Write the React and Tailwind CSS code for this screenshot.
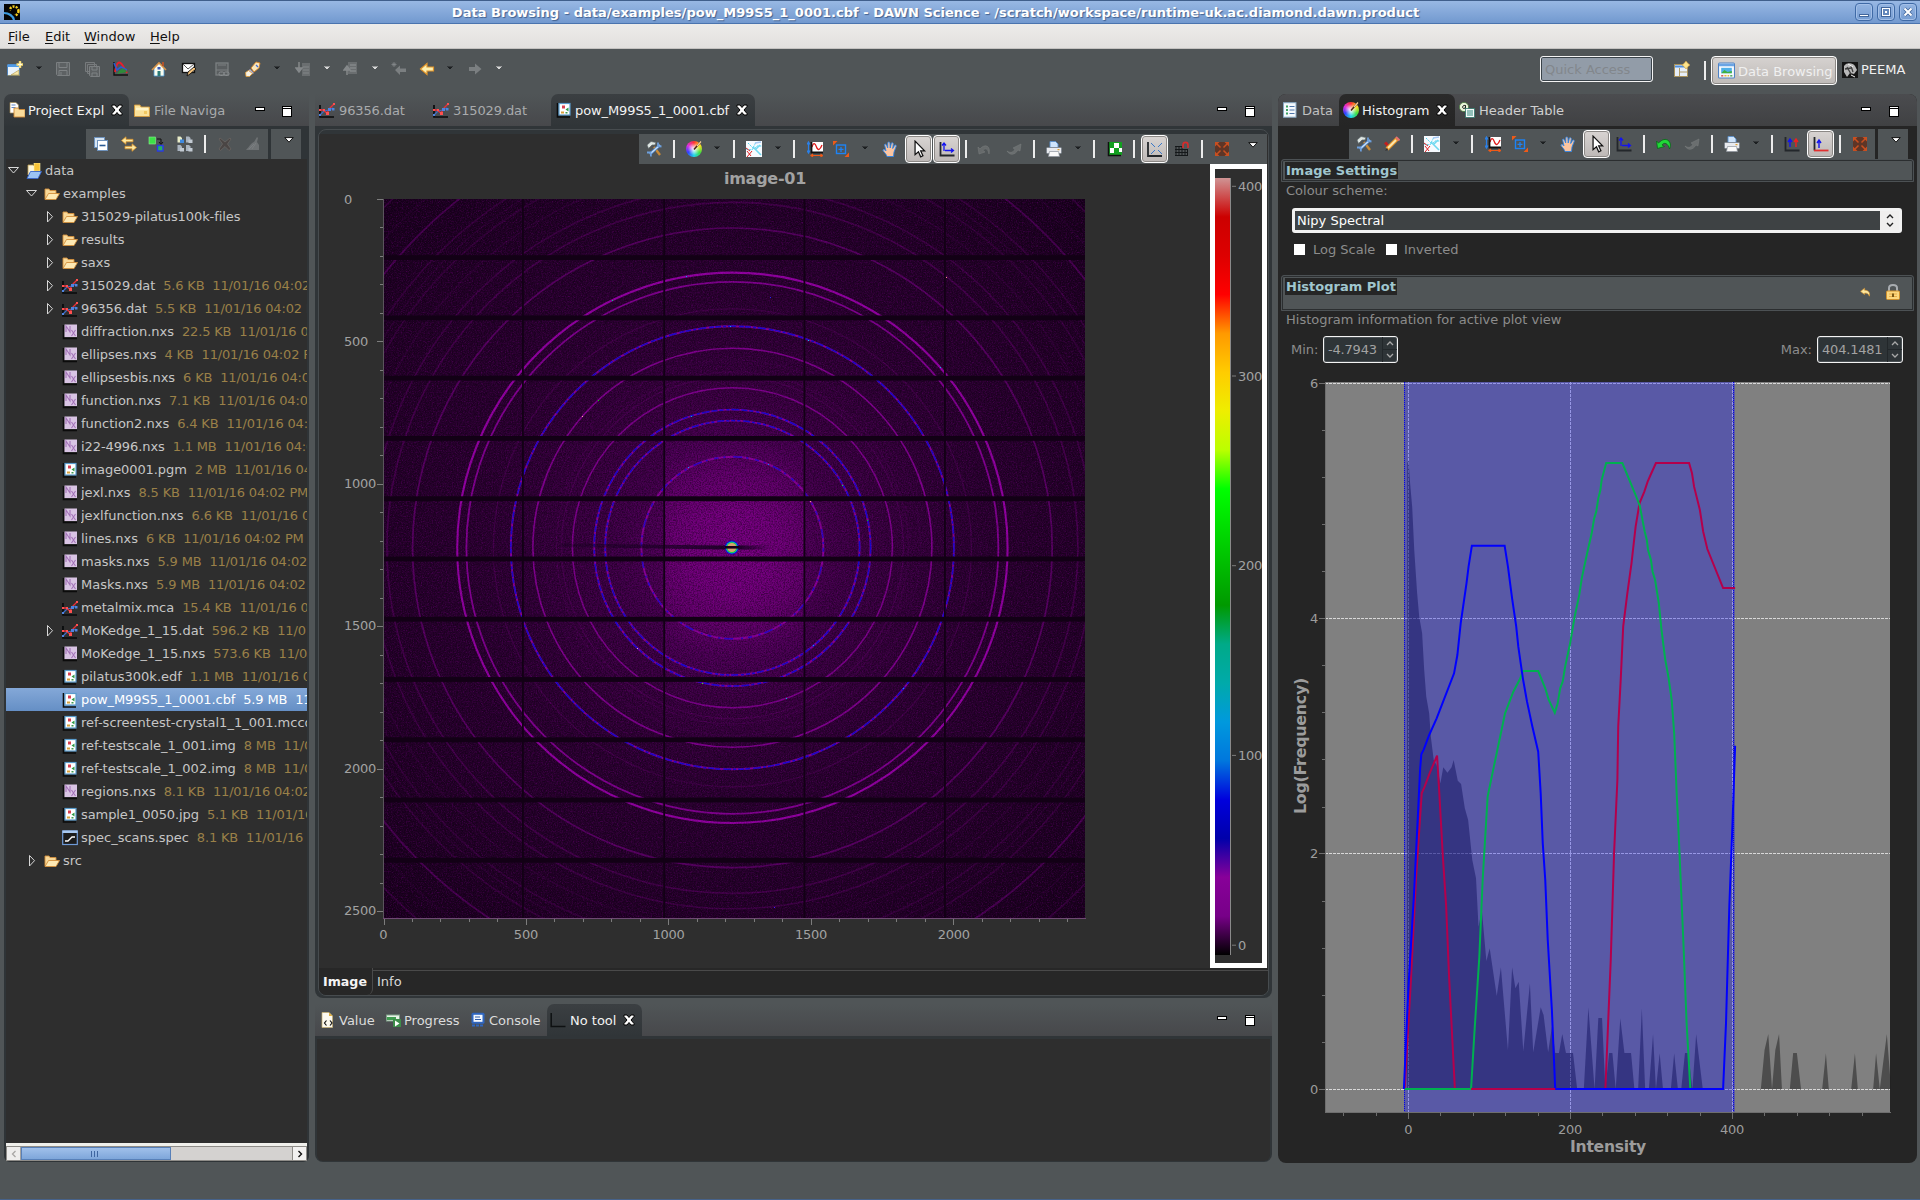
import React from "react";

/* ------------------------------------------------------------------ icons */

const Svg = ({ children, className = "h-4 w-4" }) => (
  <svg viewBox="0 0 16 16" className={`shrink-0 ${className}`}>
    {children}
  </svg>
);

const icons = {
  wizard: (
    <Svg>
      <rect x="0.5" y="3.5" width="12" height="11" rx="1" fill="#e9f3fc" stroke="#4d80b8" />
      <rect x="0.5" y="3.5" width="12" height="2.5" fill="#4f9be8" />
      <path d="M1 14.5h12M4 14l8-5v5z" fill="#f6e6a8" stroke="#a89048" strokeWidth=".6" />
      <path d="M13 0v7M9.5 3.5h6.5" stroke="#f8dc70" strokeWidth="2.4" />
      <path d="M13 1.5v4M11 3.5h4" stroke="#fffbe0" strokeWidth="1" />
    </Svg>
  ),
  save: (
    <Svg>
      <path d="M1.5 1.5h13v13h-12l-1-1z" fill="#5d6163" stroke="#7b7f81" />
      <path d="M4 1.5v5h8v-5M4 14.5V9.500h8v5M6 11v3" fill="none" stroke="#7f8385" />
    </Svg>
  ),
  saveAll: (
    <Svg>
      <path d="M1.500 1.500h9v9h-9zM3.500 3.500h9v9h-9z" fill="#56595b" stroke="#777b7d" />
      <path d="M5.500 5.500h10v10h-9l-1-1z" fill="#5d6163" stroke="#7b7f81" />
      <path d="M8 6v3h5v-3M8 15v-3h5v3" fill="none" stroke="#7f8385" />
    </Svg>
  ),
  plot: (
    <Svg>
      <path d="M1 1v13h14" fill="none" stroke="#111" strokeWidth="1.4" />
      <path d="M2 11C4 -1 7 0 10 5l4 7" fill="none" stroke="#e8202c" strokeWidth="1.900" />
      <path d="M1 2l3 7 4-3 6 3" fill="none" stroke="#2a5bd0" strokeWidth="1.600" />
      <path d="M4 13c4-7 7-7 10-2z" fill="#2f8a3a" />
    </Svg>
  ),
  home: (
    <Svg>
      <path d="M3 7v8h10V7L8 2z" fill="#fafcf0" stroke="#4a9ad4" strokeWidth=".8" />
      <path d="M1 9L8 2l7 7" fill="none" stroke="#d8944a" strokeWidth="1.600" />
      <rect x="11" y="1" width="2" height="4" fill="#b0522c" />
      <rect x="6.500" y="10" width="3" height="5" fill="#2a7a78" />
      <rect x="6.500" y="6" width="3" height="2.500" fill="#3b5bb8" />
    </Svg>
  ),
  mailPen: (
    <Svg>
      <rect x="1.500" y="2.500" width="12" height="9" fill="#fff" stroke="#111" strokeWidth="1.300" />
      <path d="M2 3l5 5 6-5" fill="none" stroke="#555" />
      <path d="M6 15l1-4 6-5 2 2-6 5z" fill="#f4c27c" stroke="#111" strokeWidth=".900" />
    </Svg>
  ),
  linkDoc: (
    <Svg>
      <rect x="2" y="2" width="12" height="12" fill="#5a5e60" stroke="#7c8082" strokeWidth="1.300" />
      <path d="M2 9h12M4 4h8" stroke="#7c8082" />
      <rect x="5" y="11" width="5" height="3.500" rx="1.500" fill="none" stroke="#888c8e" />
      <rect x="10" y="11" width="5" height="3.500" rx="1.500" fill="none" stroke="#888c8e" />
    </Svg>
  ),
  brush: (
    <Svg>
      <path d="M6 7l5-6 4 1-1 5-5 4z" fill="#fbe6b8" stroke="#d4852a" strokeWidth=".9" />
      <path d="M5 8l4 4-2 1-4-3z" fill="#b9b4c8" stroke="#84808f" strokeWidth=".6" />
      <path d="M0.500 11.500l3-2 4 3-3 3H1z" fill="#f7f2e4" stroke="#e09a34" strokeWidth=".8" />
      <path d="M11 4l2 2" stroke="#3d6bd8" strokeWidth="1.300" />
    </Svg>
  ),
  navDown: (
    <Svg>
      <path d="M7 2h8v13H7z" fill="#6a6e70" />
      <path d="M8 6h6M8 9h6M8 12h6" stroke="#828688" />
      <path d="M4 1v8M1 7l3 4 3-4z" fill="#85898b" stroke="#85898b" strokeWidth="1.500" />
    </Svg>
  ),
  navUp: (
    <Svg>
      <path d="M5 1h9v12H5z" fill="#6a6e70" />
      <path d="M7 4h6M7 7h6M7 10h6" stroke="#909496" />
      <path d="M4 14V7M1 9l3-4 3 4z" fill="#85898b" stroke="#85898b" strokeWidth="1.500" />
    </Svg>
  ),
  lastEdit: (
    <Svg>
      <path d="M4 9l5-4.500v3h6v3.500H9v3z" fill="#7b7f81" />
      <path d="M3 1v5M.5 3.500h5M1.300 1.800l3.400 3.400M4.700 1.800L1.300 5.200" stroke="#85898b" strokeWidth=".8" />
    </Svg>
  ),
  back: (
    <Svg>
      <path d="M1.500 8L8 2.500V6h6.500v4H8v3.500z" fill="#fdf0b0" stroke="#e0942a" strokeWidth="1.200" />
    </Svg>
  ),
  forward: (
    <Svg>
      <path d="M14.500 8L8 2.500V6H2v4h6v3.500z" fill="#7b7f81" />
    </Svg>
  ),
  collapse: (
    <Svg>
      <rect x="1.500" y="1.500" width="10" height="10" fill="#d8e6f4" stroke="#6f93bd" />
      <rect x="4.500" y="4.500" width="10" height="10" fill="#fff" stroke="#6f93bd" />
      <path d="M6.500 9.500h6" stroke="#2a5a94" strokeWidth="1.600" />
    </Svg>
  ),
  linkEditor: (
    <Svg>
      <path d="M0.500 4.500L5 .8v2.500h7v2.500H5v2.500z" fill="#fde8a0" stroke="#d8922a" strokeWidth=".8" />
      <path d="M15.500 11.500L11 7.800v2.500H4v2.500h7v2.500z" fill="#fde8a0" stroke="#d8922a" strokeWidth=".8" />
    </Svg>
  ),
  greenBlue: (
    <Svg>
      <rect x="1" y="1" width="6.500" height="7" fill="#3de048" stroke="#8cf090" strokeWidth=".6" />
      <path d="M9 3h4v5M11 6l2 2.500L15 6" fill="none" stroke="#111" />
      <rect x="9.500" y="9.500" width="5.500" height="5.500" fill="#27b060" stroke="#2a38e8" strokeWidth="1.400" />
    </Svg>
  ),
  quad: (
    <Svg>
      {[[0.500, 0.500], [9, 0.500], [0.500, 9], [9, 9]].map(([x, y], i) => (
        <g key={i}>
          <path d={`M${x} ${y}h3l1.500 1.500v4.500h-4.500z`} fill={i ? "#aab4c0" : "#e8ecc8"} />
          <rect x={x + 2.500} y={y + 3} width="4" height="3.500" fill={i ? "#c2cad2" : "#3f8ae0"} />
        </g>
      ))}
    </Svg>
  ),
  cross: (
    <Svg>
      <path d="M3 2l5 4 5-4 1 1-3.500 5 3.500 5-2 1.500L8 10.500 3.500 14.500 2 13l3.500-5L2 3z" fill="#4a4544" stroke="#6a6462" strokeWidth=".8" />
    </Svg>
  ),
  flame: (
    <Svg>
      <path d="M1 14c3-3 5-7 8-8l3-5 1 1-1 4 2 3v5z" fill="#6e7274" />
      <path d="M4 13l5-5M7 13l4-6" stroke="#7e8284" strokeWidth=".8" />
    </Svg>
  ),
  tools: (
    <Svg>
      <path d="M8 6l6 8" stroke="#c88a38" strokeWidth="2.400" />
      <path d="M14 4L4 13" stroke="#4a86d0" strokeWidth="3" />
      <path d="M14 4L4 13" stroke="#cfe2f6" strokeWidth="1.200" />
      <path d="M12 1.500v3.500l3.500 0.500M5 15.500l-.5-4-3.500 0" stroke="#6d9fdc" strokeWidth="1.800" fill="none" />
      <path d="M1 4l4-3.500 5 1-1 2.500-3 0-3.500 3.500z" fill="#dfe7e4" stroke="#5d6668" strokeWidth=".7" />
    </Svg>
  ),
  pencils: (
    <Svg>
      <path d="M1 6.500l5 5" stroke="#c02020" strokeWidth="3" />
      <path d="M3 13L13 3" stroke="#e8962a" strokeWidth="4" />
      <path d="M4 12l8-8" stroke="#fde9b0" strokeWidth="1.800" />
      <path d="M12 1l3.500 3.500" stroke="#e87070" strokeWidth="2" />
      <path d="M1 15l2-3 1 2z" fill="#333" />
    </Svg>
  ),
  imagePlot: (
    <Svg>
      <rect width="16" height="16" fill="#f6fafe" />
      <path d="M2 2l6 6 3-3 5 0M0 8l6 1 4-8" fill="none" stroke="#50d4f0" strokeWidth="1" strokeDasharray="2 1" />
      <path d="M7 6l8 8M9 9l5-5" stroke="#6fd8f0" strokeWidth="1.600" />
      <path d="M1 10l4 5M6 10l-5 6M0 7l4 3" stroke="#e02020" strokeWidth="1" />
      <path d="M9 2l6-1" stroke="#a6c8f4" strokeWidth="1.500" />
    </Svg>
  ),
  axes: (
    <Svg>
      <rect x="4" y="1" width="12" height="10" fill="#fff" />
      <path d="M5 6c1.500-5 3-4 4.500 0s3.500 3 5.500-2" fill="none" stroke="#e01818" strokeWidth="1.300" />
      <path d="M4.500 1v10.500H16" fill="none" stroke="#111" strokeWidth="1.800" />
      <path d="M1.500 2v9M0 3.500L1.500 1 3 3.500M0 9.500L1.500 12 3 9.500" fill="none" stroke="#2a80e8" strokeWidth="1.200" />
      <path d="M4 14.500h11M6 13l-2 1.500L6 16M13.500 13l2 1.500-2 1.500" fill="none" stroke="#f05a18" strokeWidth="1.200" />
    </Svg>
  ),
  zoomBox: (
    <Svg>
      <rect x="3.500" y="4" width="9" height="8.500" fill="none" stroke="#1d83f5" strokeWidth="1.400" />
      <path d="M8 6v5M5.500 8.300h5" stroke="#1d83f5" strokeWidth="1.300" />
      <path d="M0 0h4.500L0 4.500zM16 16h-4.500L16 11.500z" fill="#f05a18" />
    </Svg>
  ),
  hand: (
    <Svg>
      <path d="M5 15.500c-1-3-3-4-4.200-6.500 1-1 2.500 0 3.200 1L2.500 3.500c1-.8 1.800 0 2.200 1l1 2.500L5.800 1.500C7 .6 7.700 1 7.900 2L8.200 7l1.200-5c1-.6 1.900-.2 1.900 1l-.6 4.500 2.200-3.500c1-.2 1.600.4 1.300 1.400L12 11l-.5 4.500z" fill="#fbc4a0" stroke="#2f86e8" strokeWidth=".9" />
    </Svg>
  ),
  cursor: (
    <Svg className="h-[18px] w-[18px]">
      <path d="M4.500 1v12l3-2.500 2 4.500 2-1-2-4.300h3.500z" fill="#fff" stroke="#111" strokeWidth="1.100" />
    </Svg>
  ),
  axisArrows: (
    <Svg>
      <path d="M1.500 1v13.500H15.500" fill="none" stroke="#23272b" strokeWidth="1.800" />
      <path d="M5 10V2.500M3 4.500L5 2l2 2.500M6 9.500h8M12 7.500l2.500 2-2.500 2" fill="none" stroke="#1414f0" strokeWidth="1.300" />
    </Svg>
  ),
  undoOff: (
    <Svg>
      <path d="M1 6l1 7 6-2-2-1.500c2-3 5-2 6 3.500 2-8-4-11-9-5z" fill="#666a6b" stroke="#7a7e7f" strokeWidth=".5" />
    </Svg>
  ),
  redoOff: (
    <Svg>
      <path d="M15 3l-1 7-2-1c-3 5-8 6-11 1 3 2 6 2 8-2L7 7z" fill="#6a6e6f" stroke="#7c8081" strokeWidth=".5" />
    </Svg>
  ),
  undo: (
    <Svg>
      <path d="M0.500 5l1 7.500 7-2-2.500-1.500c2-3 6-2 7.500 4C17 6 10-1 2.500 7z" fill="#20d838" stroke="#0c6c1c" strokeWidth=".9" />
    </Svg>
  ),
  printer: (
    <Svg>
      <path d="M4 7V.5h5.500L12 3v4z" fill="#cfe4fb" stroke="#5a90cc" strokeWidth=".9" />
      <rect x="0.500" y="6.500" width="15" height="6" rx="1" fill="#e8eaee" stroke="#77808a" strokeWidth=".8" />
      <path d="M3.500 10.500h9l1 5h-11z" fill="#fafafa" stroke="#8d949c" strokeWidth=".7" />
      <rect x="11.500" y="8" width="2" height="1.200" fill="#e0a030" />
    </Svg>
  ),
  checker: (
    <Svg>
      <rect x="2" y="1" width="13" height="13" fill="#12a020" />
      <path d="M7 2h5v5H7zM3 7h4v5H3zM12 7h3v4h-3z" fill="#fff" />
      <path d="M1.500 1v13.500H14" stroke="#111" strokeWidth="1.500" fill="none" />
    </Svg>
  ),
  fit: (
    <Svg>
      <path d="M1 1v14h14" fill="none" stroke="#23272b" strokeWidth="1.800" />
      <path d="M4 2l4 4M15 2l-4 4M4 13l4-4M15 13l-4-4" stroke="#3a78c8" strokeWidth="1" fill="none" />
    </Svg>
  ),
  magnet: (
    <Svg>
      <path d="M1 5.500h7M1 8.500h13M1 11.500h13M1 14.500h13M2 5v10M5 5v10M8 5v10M11 8v7M13.500 8v7" stroke="#15181a" strokeWidth="1" />
      <path d="M9 7V4c0-3.500 5-3.500 5 0v3" fill="none" stroke="#d42c2c" strokeWidth="1.700" />
    </Svg>
  ),
  expand: (
    <Svg>
      <rect x="1" y="1" width="14" height="14" fill="#5e3526" />
      <path d="M3 3l3.500 3.500M13 3L9.500 6.500M3 13l3.500-3.500M13 13L9.500 9.500" stroke="#c94f20" strokeWidth="1.500" />
      <path d="M1 1h4.500L1 5.500zM15 1h-4.500L15 5.500zM1 15h4.500L1 10.500zM15 15h-4.500L15 10.500z" fill="#c94f20" />
    </Svg>
  ),
  upUp: (
    <Svg>
      <path d="M1.500 1v13.500H15.500" fill="none" stroke="#23272b" strokeWidth="1.800" />
      <path d="M6 11V3.500M4 6l2-3 2 3" fill="none" stroke="#1414f0" strokeWidth="1.400" />
      <path d="M12 11V3.500M10 6l2-3 2 3" fill="none" stroke="#f02020" strokeWidth="1.400" />
    </Svg>
  ),
  upRed: (
    <Svg>
      <path d="M1.500 1v13.500" fill="none" stroke="#23272b" strokeWidth="1.800" />
      <path d="M1 14.500h14.500" stroke="#e03030" strokeWidth="1.800" />
      <path d="M6 12V4.500M4 7l2-3 2 3" fill="none" stroke="#1414f0" strokeWidth="1.400" />
    </Svg>
  ),
  explorer: (
    <Svg>
      <path d="M1 .5h6l2.500 2.500v8H1z" fill="#fff" stroke="#a08850" strokeWidth=".7" />
      <path d="M2.500 3h4M2.500 5.500h4" stroke="#4f7cc0" strokeWidth=".9" />
      <path d="M5 6h4l1 1.500h6V15H5z" fill="#f9dc9c" stroke="#d08a38" strokeWidth=".9" />
    </Svg>
  ),
  folder: (
    <Svg>
      <path d="M.5 3h5.500l1 2h8.500v9.500H.5z" fill="#fbe29a" stroke="#d29a3c" strokeWidth=".9" />
      <path d="M2 7h12" stroke="#fff4c8" strokeWidth="2.500" />
      <path d="M10 9h3v3h-3z" fill="#f2c860" />
    </Svg>
  ),
  openFolder: (
    <Svg>
      <path d="M1 13V3h4l1 1.500h6V8" fill="#f8d898" stroke="#d2903c" strokeWidth=".9" />
      <path d="M1 13.500L4.500 7.500h11L12 13.500z" fill="#fde9b4" stroke="#d2903c" strokeWidth=".9" />
    </Svg>
  ),
  project: (
    <Svg>
      <path d="M2 12V2h5l1 1h2v7" fill="#fbf5dc" stroke="#c0a050" strokeWidth=".8" />
      <rect x="8" y="0" width="6" height="8" fill="#f6c238" stroke="#fff0a0" strokeWidth=".6" />
      <path d="M1 15.500L4.500 8.500h11L12 15.500z" fill="#9cc4f4" stroke="#3a66c8" strokeWidth=".9" />
    </Svg>
  ),
  dat: (
    <Svg>
      <path d="M1 3v12h14" fill="none" stroke="#080a0b" strokeWidth="1.700" />
      <path d="M1 13l4-4 5-1 4-2" fill="none" stroke="#3e6cc8" strokeWidth="1.200" />
      <path d="M1 8l3 0 4 3L11 6l4-4" fill="none" stroke="#e83038" strokeWidth="1.300" />
      <path d="M0 7h2v2H0zM7 10h3v3H7zM14 1h2v2h-2zM4 7h2v2H4z" fill="#ff5050" />
      <path d="M0 12h2v2H0zM9 6h3v3H9zM13 6h2.500v2.500H13z" fill="#4e84e0" />
    </Svg>
  ),
  nxs: (
    <Svg>
      <path d="M1.500 1v13.500H15" fill="none" stroke="#0b0b0b" strokeWidth="1.600" />
      <rect x="2.500" y="0.500" width="12.500" height="12.500" fill="#d9c4e4" />
      <path d="M4 8V2l4 6V2M9.500 6l4 6M13.500 6l-4 6" fill="none" stroke="#a473b8" strokeWidth="1.100" />
    </Svg>
  ),
  img: (
    <Svg>
      <path d="M1.500 1v14H14" fill="none" stroke="#0b0b0b" strokeWidth="1.600" />
      <rect x="3" y="1.500" width="11" height="11.500" fill="#fff" stroke="#5a9ccc" strokeWidth="1.200" />
      <rect x="6" y="3.500" width="3" height="3" fill="#d84050" />
      <path d="M12.500 5.500v4L9.500 7.500z" fill="#2f9a48" />
      <path d="M5 9.500h3v2H5z" fill="#d8a03c" />
      <rect x="9.500" y="10" width="2" height="1.500" fill="#409a50" />
    </Svg>
  ),
  spec: (
    <Svg>
      <rect x="0.700" y="1" width="14.600" height="13.500" fill="#1c1c1c" stroke="#6f9bd8" strokeWidth="1.200" />
      <rect x="0.500" y="0.500" width="15" height="2.500" fill="#a8c8f0" />
      <path d="M3 11h3l4-4h3" fill="none" stroke="#fff" strokeWidth="1.300" />
    </Svg>
  ),
  value: (
    <Svg>
      <path d="M2 .5h7l3.500 3.500v11.500H2z" fill="#fdfaf0" stroke="#c8b070" strokeWidth=".7" />
      <path d="M9 .5V4h3.500z" fill="#e0b040" />
      <path d="M6.500 8.500L4.500 11l2 2.500M10 8.500l2 2.500-2 2.500" fill="none" stroke="#111" strokeWidth="1.200" />
    </Svg>
  ),
  progress: (
    <Svg>
      <rect x="0.500" y="3" width="13" height="6" fill="#e8f4e8" stroke="#7fa088" />
      <rect x="1" y="5" width="9" height="3" fill="#3f9c50" />
      <rect x="7" y="7" width="8" height="8" fill="#3d8d4a" />
      <path d="M9 8.500v6l4.500-3z" fill="#fff" />
    </Svg>
  ),
  console: (
    <Svg>
      <rect x="1.500" y="0.800" width="13" height="11" rx="1.500" fill="#2f66c0" />
      <rect x="3.500" y="2.800" width="9" height="7" fill="#f4f8fe" />
      <path d="M5 5h5M5 7.500h6" stroke="#2f5ca8" />
      <path d="M2 13.500h12" stroke="#2f66c0" strokeWidth="2" strokeDasharray="3 1" />
    </Svg>
  ),
  noTool: (
    <Svg>
      <path d="M1.200 1v13.500H15.500" fill="none" stroke="#0e1112" strokeWidth="1.500" />
    </Svg>
  ),
  dataTab: (
    <Svg>
      <rect x="1.500" y="0.700" width="12.500" height="14.500" fill="#f5f9fd" stroke="#88a8c4" />
      <path d="M4 3.500h2v2H4zM4 7h2v2H4zM4 10.500h2v2H4z" fill="#3ca060" />
      <path d="M7.500 4.500h5M7.500 8h5M7.500 11.500h5" stroke="#4c74a8" />
    </Svg>
  ),
  header: (
    <Svg>
      <circle cx="5" cy="5" r="4.600" fill="#e8f4d8" stroke="#4a7a40" strokeWidth=".8" />
      <path d="M6.500 3.500c-3-1-4 3-1.500 3 1.500 0 1.500-2 1.500-3v3.500" fill="none" stroke="#222" strokeWidth="1" />
      <rect x="6.500" y="6.500" width="9" height="9" fill="#f6fbfb" stroke="#2f7468" strokeWidth=".8" />
      <path d="M8 9h6M8 11h6M8 13h6" stroke="#2f8478" />
    </Svg>
  ),
  openPersp: (
    <Svg>
      <rect x="0.500" y="3.500" width="13" height="12" fill="#e6eef8" stroke="#a8925c" />
      <path d="M1 5.500h12" stroke="#4f8fdc" strokeWidth="2" />
      <path d="M5.500 7v8M6 11h7" stroke="#b09c68" />
      <path d="M12 0l2 2.500 2 1.500-2 1.500-2 2.500-2-2.500L8 4l2-1.500z" fill="#fde48c" stroke="#c89a3c" strokeWidth=".6" />
    </Svg>
  ),
  browsing: (
    <Svg className="h-[17px] w-[17px]">
      <rect x="0.500" y="1" width="15" height="14" rx="1" fill="#f6fafe" stroke="#4f82c4" />
      <rect x="1" y="1.500" width="14" height="2.500" fill="#69a4e4" />
      <rect x="3" y="5.500" width="10" height="5" fill="#4fb0e8" />
      <path d="M3 10.500l3-3 3 2 4-1v2z" fill="#3fb040" />
      <path d="M3 13h2" stroke="#d04848" strokeWidth="1.300" />
      <path d="M6 13h2M9 13h1.500" stroke="#e8b838" strokeWidth="1.300" />
      <path d="M11.500 13h2" stroke="#40a050" strokeWidth="1.300" />
    </Svg>
  ),
  peema: (
    <Svg>
      <rect width="16" height="16" fill="#151515" />
      <path d="M2 4c3-4 9-3 11 0l2 4-3 4-4-1-3 4-3-5z" fill="#b8b8b8" />
      <path d="M5 5l4 7M9 4l2 6M3 7l6-1" stroke="#3c3c3c" strokeWidth="1.300" />
      <path d="M6 2l5 3M9 13l4 2" stroke="#f4f4f4" />
    </Svg>
  ),
  reset: (
    <Svg>
      <path d="M2 8l5-4v2.500c5 0 7 3 6 7.500-1-3-3-4-6-4V12z" fill="#fde8a0" stroke="#d8922a" strokeWidth=".8" transform="translate(2 1) scale(.8)" />
    </Svg>
  ),
  lock: (
    <Svg>
      <path d="M4 7.500V4c0-4 8-4 8 0v3.500" fill="none" stroke="#a8acb0" strokeWidth="2" />
      <rect x="1.500" y="7" width="13" height="8.500" rx="1" fill="#fbd880" stroke="#d0902c" />
      <path d="M4 10h8M4 12.500h8" stroke="#e8ac48" />
      <rect x="7" y="9.500" width="2" height="3.500" fill="#7a5818" />
    </Svg>
  ),
};

icons.color = (
  <div className="relative h-4 w-4 shrink-0 rounded-full bg-[conic-gradient(#ff3030,#ffe020,#40e040,#20d8e8,#3040ff,#e030e0,#ff3030)]">
    <div className="h-4 w-4 rounded-full bg-[radial-gradient(circle,#fffffff0_5%,#ffffff00_55%)]" />
    <svg viewBox="0 0 16 16" className="absolute inset-0 h-4 w-4">
      <path d="M8 8.500l6.500-7.500" stroke="#4a2418" strokeWidth="1.600" />
      <path d="M11 5l4-4.500" stroke="#f6d0a0" strokeWidth="1.200" />
    </svg>
  </div>
);

const Drop = ({ light }) => (
  <svg viewBox="0 0 6 4" className="h-1 w-1.5">
    <path d="M.5.5L3 3 5.500.5" fill={light ? "#d8d8d8" : "#1c1f21"} stroke={light ? "#d8d8d8" : "#1c1f21"} />
  </svg>
);

const MenuTri = () => (
  <svg viewBox="0 0 10 6" className="h-1.5 w-2.5">
    <path d="M.8.6h8.400L5 5.200z" fill="#fff" stroke="#000" strokeWidth=".9" />
  </svg>
);

/* A toolbar entry is [kind-or-icon, margin class, "on" when pressed]. */
function Tools({ items }) {
  return items.map(([name, ml, on], i) => {
    if (name === "|") return <div key={i} className={`h-[18px] w-0.5 shrink-0 bg-[#ececec] ${ml}`} />;
    if (name === "v" || name === "V")
      return (
        <div key={i} className={`-mt-0.5 w-1.5 shrink-0 ${ml}`}>
          <Drop light={name === "V"} />
        </div>
      );
    if (name === "tri")
      return (
        <div key={i} className={`-mt-2 w-2.5 shrink-0 ${ml}`}>
          <MenuTri />
        </div>
      );
    if (on)
      return (
        <div
          key={i}
          className={`flex h-7 w-[27px] shrink-0 items-center justify-center rounded border border-white bg-gradient-to-b from-[#d8d4d2] to-[#bdb8b6] shadow-[inset_0_0_0_1px_#8c8986] ${ml}`}
        >
          {icons[name]}
        </div>
      );
    return (
      <div key={i} className={`shrink-0 ${ml}`}>
        {icons[name]}
      </div>
    );
  });
}

const mainTools = [
  ["wizard", "ml-[7px]"], ["v", "ml-[13px]"], ["save", "ml-[13px]"], ["saveAll", "ml-[13px]"], ["plot", "ml-[13px]"],
  ["home", "ml-[22px]"], ["mailPen", "ml-[14px]"], ["linkDoc", "ml-[17px]"], ["brush", "ml-[15px]"], ["v", "ml-[13px]"],
  ["navDown", "ml-[15px]"], ["V", "ml-[13px]"], ["navUp", "ml-[13px]"], ["V", "ml-[13px]"], ["lastEdit", "ml-[13px]"],
  ["back", "ml-3"], ["v", "ml-3"], ["forward", "ml-[14px]"], ["V", "ml-[13px]"],
];
const explorerTools = [
  ["collapse", "ml-[7px]"], ["linkEditor", "ml-3"], ["greenBlue", "ml-[11px]"], ["quad", "ml-[13px]"], ["|", "ml-[11px]"],
  ["cross", "ml-[11px]"], ["flame", "ml-3"],
];
const editorTools = [
  ["tools", "ml-[7px]"], ["|", "ml-[11px]"], ["color", "ml-[11px]"], ["v", "ml-3"], ["|", "ml-[13px]"],
  ["imagePlot", "ml-[11px]"], ["v", "ml-[13px]"], ["|", "ml-3"], ["axes", "ml-3"], ["zoomBox", "ml-2.5"],
  ["v", "ml-[13px]"], ["hand", "ml-[14px]"], ["cursor", "ml-[7px]", "on"], ["axisArrows", "ml-px", "on"], ["|", "ml-[5px]"],
  ["undoOff", "ml-2.5"], ["redoOff", "ml-[13px]"], ["|", "ml-[11px]"], ["printer", "ml-[11px]"], ["v", "ml-[13px]"],
  ["|", "ml-3"], ["checker", "ml-3"], ["|", "ml-2.5"], ["fit", "ml-1.5", "on"], ["magnet", "ml-1.5"],
  ["|", "ml-[11px]"], ["expand", "ml-[11px]"], ["tri", "ml-[18px]"],
];
const histogramTools = [
  ["tools", "ml-[7px]"], ["pencils", "ml-3"], ["|", "ml-[11px]"], ["imagePlot", "ml-[11px]"], ["v", "ml-[13px]"],
  ["|", "ml-3"], ["axes", "ml-3"], ["zoomBox", "ml-[11px]"], ["v", "ml-3"], ["hand", "ml-[14px]"],
  ["cursor", "ml-[7px]", "on"], ["axisArrows", "ml-1.5"], ["|", "ml-[11px]"], ["undo", "ml-[11px]"], ["redoOff", "ml-3"],
  ["|", "ml-[11px]"], ["printer", "ml-[11px]"], ["v", "ml-[13px]"], ["|", "ml-3"], ["upUp", "ml-[11px]"],
  ["upRed", "ml-[7px]", "on"], ["|", "ml-[5px]"], ["expand", "ml-[11px]"],
];

/* ------------------------------------------------------------ window bars */

function TitleBar() {
  const btn = "flex h-[18px] w-[18px] items-center justify-center rounded-[4px] border border-[#3f6aa6] shadow-[inset_0_0_0_1px_#a4c0e8]";
  return (
    <div className="flex h-6 items-center border-t border-b border-t-[#405f8c] border-b-[#4a74ae] bg-gradient-to-b from-[#98b8e4] to-[#7299cf] pl-1 pr-[3px]">
      <svg viewBox="0 0 16 16" className="h-4 w-4">
        <rect width="16" height="16" fill="#050505" />
        <circle cx="10" cy="7" r="4.500" fill="none" stroke="#f8d020" strokeWidth="2.500" strokeDasharray="2 1.200" />
        <path d="M0 4c6 1 11 5 13 12H9C8 12 5 9 0 9z" fill="#050505" />
        <path d="M0 9c5 0 9 3 10 7" fill="none" stroke="#3a9ae0" strokeWidth="2.200" />
      </svg>
      <div className="flex-1 pr-1 pt-px text-center font-bold tracking-[0.02px] text-white [text-shadow:1px_1px_1px_#41608f]">
        Data Browsing - data/examples/pow_M99S5_1_0001.cbf - DAWN Science - /scratch/workspace/runtime-uk.ac.diamond.dawn.product
      </div>
      <div className="flex gap-1">
        <div className={btn}>
          <div className="mt-1.5 h-[3px] w-2.5 border border-[#41669c] bg-white" />
        </div>
        <div className={btn}>
          <div className="flex h-2 w-2 items-center justify-center border border-white bg-[#6388bc] outline outline-[#41669c]">
            <div className="h-0.5 w-0.5 bg-white" />
          </div>
        </div>
        <div className={btn}>
          <svg viewBox="0 0 10 10" className="h-2.5 w-2.5">
            <path d="M1.500 1.500l7 7M8.500 1.500l-7 7" stroke="#41669c" strokeWidth="3.600" />
            <path d="M1.500 1.500l7 7M8.500 1.500l-7 7" stroke="#fff" strokeWidth="2" />
          </svg>
        </div>
      </div>
    </div>
  );
}

const MenuItem = ({ first, rest, className }) => (
  <div className={className}>
    <span className="underline underline-offset-2">{first}</span>
    {rest}
  </div>
);

function MenuBar() {
  return (
    <div className="flex h-[25px] items-center border-b border-[#c4c2c0] bg-gradient-to-b from-[#edecea] to-[#e2e0de] pt-px pl-2 text-[#111]">
      <MenuItem first="F" rest="ile" className="w-[37px]" />
      <MenuItem first="E" rest="dit" className="w-[39px]" />
      <MenuItem first="W" rest="indow" className="w-[66px]" />
      <MenuItem first="H" rest="elp" />
    </div>
  );
}

function MainToolbar() {
  return (
    <div className="flex h-[45px] items-start">
      <div className="flex h-10 w-[1540px] items-center">
        <Tools items={mainTools} />
      </div>
      <div className="mt-[7px] flex h-[26px] w-[113px] items-center rounded-[3px] border border-[#f4f4f4] bg-[#929ca8] pt-px pl-1 text-[#82878c] shadow-[inset_0_0_0_1px_#3a434a]">
        Quick Access
      </div>
      <div className="mt-3 ml-[21px] h-4">{icons.openPersp}</div>
      <div className="mt-3 ml-3.5 h-[19px] w-0.5 bg-[#ececec]" />
      <div className="mt-[7px] ml-[5px] flex h-[29px] w-[126px] items-center gap-[3px] rounded border border-white bg-gradient-to-b from-[#d6d2d0] to-[#bfbbb8] pl-1.5 text-[#f0f0f0] shadow-[inset_0_0_0_1px_#8c8986]">
        {icons.browsing}
        <span className="pt-0.5">Data Browsing</span>
      </div>
      <div className="mt-[13px] ml-[5px] flex items-center gap-[3px] leading-4 text-[#f0f0f0]">
        {icons.peema}
        PEEMA
      </div>
    </div>
  );
}

/* ------------------------------------------------------------------- tabs */

const Close = () => (
  <svg viewBox="0 0 12 12" className="h-3 w-3 shrink-0">
    <path d="M1 1h3l2 2.500L8 1h3v1.500L8 6l3 3.500V11H8L6 8.500 4 11H1V9.500L4 6 1 2.500z" fill="#fff" stroke="#000" strokeWidth="1" />
  </svg>
);

const MinMax = ({ className, gap = "gap-[18px]" }) => (
  <div className={`flex h-3 items-start ${gap} ${className}`}>
    <div className="mt-px h-1 w-2.5 border border-black bg-white" />
    <div className="h-[11px] w-2.5 border border-black bg-white">
      <div className="mt-px h-px bg-black" />
    </div>
  </div>
);

function Tab({ icon, label, className = "", active, text = "text-[#a9abad]", close, bg = "from-[#3b3f42] to-[#303538]" }) {
  return (
    <div
      className={`flex h-8 shrink-0 items-center ${active ? `rounded-t-[7px] bg-gradient-to-b ${bg} text-[#f2f2f2]` : text} ${className}`}
    >
      {icons[icon]}
      <span className={`mt-px whitespace-nowrap ${active ? "ml-[3px]" : "ml-1"}`}>{label}</span>
      {close && <div className="ml-[7px]"><Close /></div>}
    </div>
  );
}

/* ------------------------------------------------------- project explorer */

const stamp = "  11/01/16 04:02 PM";
const files = [
  [2, "closed", "openFolder", "315029-pilatus100k-files"],
  [2, "closed", "openFolder", "results"],
  [2, "closed", "openFolder", "saxs"],
  [2, "closed", "dat", "315029.dat", "5.6 KB"],
  [2, "closed", "dat", "96356.dat", "5.5 KB"],
  [2, "", "nxs", "diffraction.nxs", "22.5 KB"],
  [2, "", "nxs", "ellipses.nxs", "4 KB"],
  [2, "", "nxs", "ellipsesbis.nxs", "6 KB"],
  [2, "", "nxs", "function.nxs", "7.1 KB"],
  [2, "", "nxs", "function2.nxs", "6.4 KB"],
  [2, "", "nxs", "i22-4996.nxs", "1.1 MB"],
  [2, "", "img", "image0001.pgm", "2 MB"],
  [2, "", "nxs", "jexl.nxs", "8.5 KB"],
  [2, "", "nxs", "jexlfunction.nxs", "6.6 KB"],
  [2, "", "nxs", "lines.nxs", "6 KB"],
  [2, "", "nxs", "masks.nxs", "5.9 MB"],
  [2, "", "nxs", "Masks.nxs", "5.9 MB"],
  [2, "", "dat", "metalmix.mca", "15.4 KB"],
  [2, "closed", "dat", "MoKedge_1_15.dat", "596.2 KB"],
  [2, "", "nxs", "MoKedge_1_15.nxs", "573.6 KB"],
  [2, "", "img", "pilatus300k.edf", "1.1 MB"],
  [2, "", "img", "pow_M99S5_1_0001.cbf", "5.9 MB", true],
  [2, "", "img", "ref-screentest-crystal1_1_001.mccd", "8 MB"],
  [2, "", "img", "ref-testscale_1_001.img", "8 MB"],
  [2, "", "img", "ref-testscale_1_002.img", "8 MB"],
  [2, "", "nxs", "regions.nxs", "8.1 KB"],
  [2, "", "img", "sample1_0050.jpg", "5.1 KB"],
  [2, "", "spec", "spec_scans.spec", "8.1 KB"],
];
const rows = [[0, "open", "project", "data"], [1, "open", "openFolder", "examples"], ...files, [1, "closed", "openFolder", "src"]];
const indent = ["pl-0.5", "pl-5", "pl-[38px]"];

const Twisty = ({ state }) => (
  <svg viewBox="0 0 12 12" className="mr-1.5 h-3 w-3 shrink-0">
    {state === "open" && <path d="M.5 2.500h10L5.500 8z" fill="none" stroke="#d8d8d8" />}
    {state === "closed" && <path d="M3.500.5v10.500L8.500 5.700z" fill="none" stroke="#d8d8d8" />}
  </svg>
);

function Explorer() {
  return (
    <div className="flex h-[1068px] w-[305px] flex-col rounded-b-md bg-[#2f3437]">
      <div className="flex h-8 bg-gradient-to-b from-[#505557] to-[#47484b]">
        <Tab active icon="explorer" label={<span className="block w-[76px] overflow-hidden">Project Expl</span>} close className="w-[125px] pl-[5px]" />
        <Tab icon="folder" label={<span className="block w-[73px]">File Naviga</span>} className="pl-[5px]" />
        <MinMax className="mt-3 ml-[28px]" gap="gap-[17px]" />
      </div>
      <div className="mt-[3px] ml-[82px] flex h-[30px] gap-[3px]">
        <div className="flex w-[182px] items-center bg-[#505557]">
          <Tools items={explorerTools} />
        </div>
        <div className="flex w-[30px] items-center bg-[#505557]">
          <Tools items={[["tri", "ml-[13px]"]]} />
        </div>
      </div>
      <div className="mx-0.5 h-[984px] overflow-hidden bg-[#2e2e2e]">
        {rows.map(([depth, state, icon, name, size, selected]) => (
          <div
            key={name}
            className={`flex h-[23px] items-center ${indent[depth]} ${selected ? "bg-gradient-to-b from-[#84a8d8] to-[#658fc5]" : ""}`}
          >
            <Twisty state={state} />
            {icons[icon]}
            <span
              className={`ml-[3px] min-w-0 flex-1 overflow-hidden whitespace-pre ${selected ? "text-white" : "text-[#c6c6c6]"} ${/\d{4}/.test(name) ? "tracking-[-0.09px]" : ""}`}
            >
              {name}
              {size && (
                <span className={`tracking-[-0.16px] ${selected ? "text-white" : "text-[#9a8048]"}`}>{`  ${size}${stamp}`}</span>
              )}
            </span>
          </div>
        ))}
      </div>
      <div className="mx-0.5 h-[18px] border-t-[3px] border-[#f0f0ec]">
        <div className="flex h-[15px] border border-[#8e8c88] bg-[#d4d2d0]">
          <div className="flex w-[14px] items-center justify-center border-r border-[#a4a2a0] bg-[#eeedec]">
            <svg viewBox="0 0 6 8" className="h-2 w-1.5"><path d="M4.500 1L1.500 4l3 3" fill="none" stroke="#a8a6a4" strokeWidth="1.300" /></svg>
          </div>
          <div className="flex w-[150px] items-center justify-center gap-0.5 border border-[#5880b8] bg-gradient-to-b from-[#a0c0ea] to-[#7ea6da] pr-1">
            <div className="h-1.5 w-px bg-[#3f66a0]" />
            <div className="h-1.5 w-px bg-[#3f66a0]" />
            <div className="h-1.5 w-px bg-[#3f66a0]" />
          </div>
          <div className="flex-1" />
          <div className="flex w-[14px] items-center justify-center border-l border-[#8e8c88] bg-[#f2f1f0]">
            <svg viewBox="0 0 6 8" className="h-2 w-1.5"><path d="M1.500 1l3 3-3 3" fill="none" stroke="#111" strokeWidth="1.400" /></svg>
          </div>
        </div>
      </div>
    </div>
  );
}

/* -------------------------------------------------------- detector image */

const CX = 732.4;
const CY = 547.8;
// radius, colour, opacity, width
const rings = [
  [171, "#7a0088", 0.26, 1.2], [176, "#7a0088", 0.16, 1.2], [188, "#7a0088", 0.1, 1.2], [239, "#7a0088", 0.26, 1.3],
  [160, "#8c009c", 0.85, 1.5], [199.5, "#8c009c", 0.88, 1.6], [266, "#8c009c", 0.9, 1.8], [275.2, "#9400a4", 1, 2.1],
  [319.8, "#840094", 0.52, 1.7], [345.5, "#7a0088", 0.35, 1.7], [361, "#7a0088", 0.3, 1.6], [380, "#7a0088", 0.13, 1.6],
  [399, "#7a0088", 0.22, 1.6], [407, "#7a0088", 0.12, 1.5], [416, "#7a0088", 0.25, 1.6], [443, "#840094", 0.42, 1.8],
  [465, "#7a0088", 0.1, 1.6], [487, "#7a0088", 0.28, 1.7],
];
const blueRings = [
  [91, "4 5 2 8 9 4 2 7", 0.8],
  [127.2, "4 2 3 3 7 2 3 2", 0.95],
  [138.2, "6 2 4 3 3 2 8 2", 0.95],
  [221.5, "5 1 6 2 3 2 8 3", 0.95],
];
const specks = [
  [945.5, 276.5, "#ff9090"], [686, 276, "#00b0ff"], [612, 300, "#00d080"], [842, 485, "#00e060"], [770, 297, "#2020ff"],
  [582, 416, "#ffb0a0"], [690.5, 416, "#00c0c0"], [598, 400, "#00e000"], [702, 682.500, "#20ff20"], [637, 648, "#ffa0c0"],
  [810, 501, "#ffa0a0"], [688, 467, "#00a0ff"], [768, 464, "#0090ff"], [813, 645, "#00a0ff"], [903, 688, "#00a0ff"],
  [786, 698, "#00c0d0"], [867, 520, "#00c020"], [774, 907, "#4020ff"], [730, 326, "#00a0ff"], [808, 340, "#00d0e0"],
  [940, 367, "#00c0d0"],
];

const axisText = { fontFamily: '"DejaVu Sans", sans-serif', fontSize: 13, fill: "#a2a2a2", letterSpacing: -0.25 };

function DetectorPlot() {
  const minorX = Array.from({ length: 25 }, (_, i) => i);
  const minorY = Array.from({ length: 26 }, (_, i) => i);
  return (
    <svg viewBox="319 164 891 804" className="h-[804px] w-[891px] shrink-0">
      <defs>
        <clipPath id="frame"><rect x="384" y="199" width="701" height="719" /></clipPath>
        <radialGradient id="falloff" gradientUnits="userSpaceOnUse" cx={CX} cy={CY} r="500">
          <stop offset="0" stopColor="#44004e" />
          <stop offset="0.3" stopColor="#38003f" />
          <stop offset="0.5" stopColor="#2c0032" />
          <stop offset="1" stopColor="#1b001f" />
        </radialGradient>
        <radialGradient id="glow" gradientUnits="userSpaceOnUse" cx={CX} cy={CY + 2} r="205">
          <stop offset="0" stopColor="#86008f" stopOpacity="1" />
          <stop offset="0.2" stopColor="#82008c" stopOpacity="0.92" />
          <stop offset="0.38" stopColor="#74007e" stopOpacity="0.7" />
          <stop offset="0.55" stopColor="#5c0068" stopOpacity="0.45" />
          <stop offset="0.75" stopColor="#500058" stopOpacity="0.2" />
          <stop offset="1" stopColor="#500058" stopOpacity="0" />
        </radialGradient>
        <filter id="dark" x="0" y="0" width="100%" height="100%" colorInterpolationFilters="sRGB">
          <feTurbulence type="fractalNoise" baseFrequency="0.75" numOctaves="2" seed="4" />
          <feColorMatrix values="0 0 0 0 0.03  0 0 0 0 0  0 0 0 0 0.04  2.6 0 0 0 -0.95" />
        </filter>
        <filter id="bright" x="0" y="0" width="100%" height="100%" colorInterpolationFilters="sRGB">
          <feTurbulence type="fractalNoise" baseFrequency="0.8" numOctaves="2" seed="19" />
          <feColorMatrix values="0 0 0 0 0.5  0 0 0 0 0  0 0 0 0 0.56  0 2.4 0 0 -1.18" />
        </filter>
        <linearGradient id="arm" x1="0" x2="1" y1="0" y2="0">
          <stop offset="0" stopColor="#10001a" stopOpacity="0.3" />
          <stop offset="0.4" stopColor="#10001a" stopOpacity="0.55" />
          <stop offset="0.85" stopColor="#10001a" stopOpacity="0.85" />
          <stop offset="1" stopColor="#10001a" stopOpacity="0.1" />
        </linearGradient>
      </defs>
      <text x="765" y="184" textAnchor="middle" textLength="82" lengthAdjust="spacingAndGlyphs" {...axisText} fontSize="15.500" fontWeight="bold">
        image-01
      </text>
      <g clipPath="url(#frame)">
        <rect x="384" y="199" width="701" height="719" fill="url(#falloff)" />
        <rect x="524" y="340" width="421" height="420" fill="url(#glow)" opacity="0.42" />
        <rect x="664" y="380" width="140" height="358" fill="url(#glow)" opacity="0.55" />
        <rect x="664" y="440" width="140" height="237" fill="url(#glow)" opacity="0.4" />
        <rect x="384" y="199" width="701" height="719" filter="url(#dark)" opacity="0.320" />
        {rings.map(([r, c, o, w]) => (
          <circle key={r} cx={CX} cy={CY} r={r} fill="none" stroke={c} strokeOpacity={o} strokeWidth={w} />
        ))}
        {blueRings.map(([r, dash, o]) => (
          <g key={r} fill="none">
            <circle cx={CX} cy={CY} r={r} stroke="#8a009a" strokeWidth="1.900" />
            <circle cx={CX} cy={CY} r={r} stroke="#1008d8" strokeWidth="1.500" strokeDasharray={dash} strokeOpacity={o} />
          </g>
        ))}
        <rect x="384" y="199" width="701" height="719" filter="url(#bright)" opacity="0.400" />
        <rect x="384" y="199" width="701" height="719" filter="url(#dark)" opacity="0.160" />
        <path d="M560 543.500l166 2h44v4H726l-166-2.500z" fill="url(#arm)" />
        <g shapeRendering="crispEdges">
          {specks.map(([x, y, c]) => (
            <rect key={`${x}${y}`} x={x} y={y} width="1" height="1" fill={c} />
          ))}
        </g>
        <circle cx="731.800" cy="547.500" r="7" fill="#1010d0" />
        <circle cx="731.800" cy="547.500" r="5.900" fill="#00b8d8" />
        <circle cx="731.800" cy="547.500" r="5.200" fill="#20d020" />
        <circle cx="731.800" cy="547.500" r="4.500" fill="#d8a070" />
        <rect x="725" y="546" width="14" height="2.600" fill="#180018" />
        <g fill="#120015">
          {[0, 1, 2, 3, 4, 5, 6, 7, 8, 9, 10].map((k) => (
            <rect key={k} x="384" y={255.200 + 60.270 * k} width="701" height="4.800" />
          ))}
          {[522, 663.300, 803.500, 944].map((x) => (
            <rect key={x} x={x} y="199" width="1.800" height="719" />
          ))}
        </g>
      </g>
      <g stroke="#7c7c7c" shapeRendering="crispEdges">
        <path d="M383.500 199v719" stroke="#5a545c" />
        <path d="M383 918.500h703" stroke="#6e4a72" />
        {minorY.map((i) => (
          <line key={i} x1={i % 5 ? 380 : 377} x2="383" y1={199.500 + i * 28.480} y2={199.500 + i * 28.480} />
        ))}
        {minorX.map((i) => (
          <line key={i} x1={384 + i * 28.480} x2={384 + i * 28.480} y1="919" y2={i % 5 ? 922 : 925} />
        ))}
      </g>
      {[0, 500, 1000, 1500, 2000, 2500].map((v) => (
        <text key={v} x="344" y={203.500 + v * 0.2845} {...axisText}>{v}</text>
      ))}
      {[0, 500, 1000, 1500, 2000].map((v) => (
        <text key={v} x={383.300 + v * 0.2852} y="939" textAnchor="middle" {...axisText}>{v}</text>
      ))}
    </svg>
  );
}

const spectral = [
  "#000000", "#770088", "#880099", "#0000aa", "#0000dd", "#0077dd", "#0099dd", "#00aaaa", "#00aa88", "#009900", "#00bb00",
  "#00dd00", "#00ff00", "#bbff00", "#eeee00", "#ffcc00", "#ff9900", "#ff0000", "#dd0000", "#cc0000", "#cf9494",
];

function ColourBar() {
  return (
    <div className="h-[804px] w-[57px] border-x-[5px] border-y-[5px] border-white bg-[#2e2e2e]">
      <svg viewBox="1215 169 47 794" className="h-[794px] w-[47px]">
        <defs>
          <linearGradient id="spectral" x1="0" x2="0" y1="1" y2="0">
            {spectral.map((c, i) => <stop key={c} offset={i / 20} stopColor={c} />)}
          </linearGradient>
        </defs>
        <rect x="1215" y="178" width="15" height="777" fill="url(#spectral)" />
        <path d="M1230.500 178v777" stroke="#8a8a8a" />
        {[[400, 186.300], [300, 376], [200, 565.700], [100, 755.400], [0, 945.200]].map(([v, y]) => (
          <g key={v}>
            <path d={`M1232 ${y}h4`} stroke="#7c7c7c" />
            <text x="1238" y={y + 4.500} {...axisText}>{v}</text>
          </g>
        ))}
      </svg>
    </div>
  );
}

function Editor() {
  return (
    <div className="flex h-[904px] flex-col rounded-b-lg bg-[#303538]">
      <div className="flex h-8 bg-gradient-to-b from-[#505557] to-[#47484b]">
        <Tab icon="dat" label={<span className="tracking-[-0.12px]">96356.dat</span>} className="w-[114px] pl-1" />
        <Tab icon="dat" label={<span className="tracking-[-0.12px]">315029.dat</span>} className="w-[122px] pl-1" />
        <Tab active icon="img" label={<span className="tracking-[-0.1px]">pow_M99S5_1_0001.cbf</span>} close className="w-[204px] pl-[5px]" />
        <div className="flex-1" />
        <MinMax className="mt-3 mr-[17px]" />
      </div>
      <div className="mx-[3px] mt-[3px] flex h-[867px] flex-col overflow-hidden rounded-lg border border-[#474c4f] bg-[#303538]">
        <div className="mt-1 flex h-[30px] justify-end bg-[#2e2e2e] pr-px">
          <div className="flex w-[628px] items-center bg-[#505557]">
            <Tools items={editorTools} />
          </div>
        </div>
        <div className="flex h-[804px] bg-[#2e2e2e]">
          <DetectorPlot />
          <ColourBar />
        </div>
        <div className="flex flex-1 items-stretch bg-[#272727]">
          <div className="w-[54px] rounded-br-md border-r border-[#4a4a4a] pt-1.5 pl-[3px] text-center text-[12.600px] font-bold text-[#f4f4f4]">
            <span className="-ml-1">Image</span>
          </div>
          <div className="mt-0.5 flex-1 border-t border-[#4a4a4a] pt-[3px] pl-1 text-[#d8d8d8]">Info</div>
        </div>
      </div>
    </div>
  );
}

function ToolsPanel() {
  return (
    <div className="mt-1.5 flex h-[158px] flex-col rounded-b-lg bg-[#303538]">
      <div className="flex h-8 bg-gradient-to-b from-[#505557] to-[#47484b]">
        <Tab icon="value" label={<span className="-ml-px">Value</span>} text="text-[#dcdcdc]" className="w-[66px] pl-[5px]" />
        <Tab icon="progress" label={<span className="-ml-0.5">Progress</span>} text="text-[#dcdcdc]" className="w-[85px] pl-[5px]" />
        <Tab icon="console" label={<span className="-ml-px">Console</span>} text="text-[#dcdcdc]" className="w-[81px] pl-1" />
        <Tab active icon="noTool" label={<span className="pl-px">No tool</span>} close className="w-[95px] pl-[3px]" />
        <div className="flex-1" />
        <MinMax className="mt-[11px] mr-[17px]" />
      </div>
      <div className="mx-0.5 mt-[3px] h-[122px] rounded-b-md bg-[#2e2e2e]" />
    </div>
  );
}

/* -------------------------------------------------------- histogram panel */

const histogram =
  "330,2187 331,310 334,300 338,370 343,440 348,570 355,700 360,770 367,820 372,930 377,1010 384,1060 388,1130 395,1200 402,1215 411,1270 418,1222 428,1238 438,1222 443,1200 453,1262 461,1272 470,1345 478,1380 488,1500 497,1555 503,1700 511,1650 522,1803 530,1765 547,1908 557,1822 574,2070 584,1822 592,1885 600,1865 611,2073 627,1870 635,2077 653,1942 660,1965 671,2077 680,2000 688,2079 697,2079 705,2022 714,2079 731,2079 741,2187 757,2187 768,1942 783,2187 792,1974 801,1974 809,2187 818,2079 826,2079 834,2187 845,1975 855,2079 871,2079 879,2187 888,2187 897,1945 905,2187 914,2187 924,2022 931,2187 940,2080 948,2187 967,2187 975,2080 984,2187 992,2187 1001,2079 1009,2079 1019,2187 1028,2022 1044,2187 1184,2187 1193,2070 1202,2022 1211,2187 1219,2070 1228,2022 1235,2187 1254,2187 1262,2079 1271,2079 1281,2187 1332,2187 1341,2080 1348,2187 1402,2187 1411,2080 1418,2187 1455,2187 1462,2080 1471,2187 1488,2022 1496,2150 1496,2187";
const curves = [
  ["#b4004c", "325,2187 340,1860 352,1560 366,1300 373,1280 385,1240 403,1187 408,1290 417,1490 425,1640 432,1850 446,2187 809,2187 822,1800 830,1480 838,1260 840,1100 846,960 852,800 862,700 872,610 882,500 890,440 892,428 903,395 911,365 918,345 931,309 1011,309 1018,340 1023,380 1037,450 1045,515 1055,567 1093,684 1122,684"],
  ["#00b050", "325,2187 485,2187 493,2020 505,1790 513,1560 525,1310 540,1220 567,1060 587,995 604,955 610,933 647,933 664,985 672,1018 687,1058 694,1030 700,985 706,965 712,920 724,850 735,770 746,705 752,655 765,580 776,520 782,475 787,455 792,415 797,390 800,360 811,309 850,309 882,405 892,437 904,515 909,540 912,570 919,600 923,635 929,660 938,730 944,805 953,895 961,950 969,1020 975,1120 981,1300 985,1400 997,1740 1005,1990 1014,2187"],
  ["#0000ff", "323,2187 334,1880 347,1610 357,1360 362,1230 365,1183 371,1168 384,1125 402,1075 444,940 452,885 460,790 474,670 479,620 487,557 566,557 574,620 584,715 594,800 599,860 610,955 620,1025 633,1100 647,1175 653,1300 658,1450 664,1560 670,1740 680,1950 688,2187 1093,2187 1100,1990 1108,1640 1116,1380 1122,1157"],
];

function HistogramPlot() {
  const ys = [[6, 383.500], [4, 618.500], [2, 853.500], [0, 1089.500]];
  return (
    <svg viewBox="1278 370 638 786" className="h-[786px] w-[638px]">
      <rect x="1325" y="382" width="565" height="730" fill="#808080" />
      <g stroke="#d8d8d8" strokeDasharray="3 1" shapeRendering="crispEdges">
        {ys.map(([v, y]) => <path key={v} d={`M1325 ${y}h565`} />)}
        {[1408.500, 1570.500, 1732.500].map((x) => <path key={x} d={`M${x} 382v730`} />)}
      </g>
      <g transform="translate(1270 360) scale(.414542 .333333)">
        <polygon points={histogram} fill="#000" fillOpacity="0.4" />
      </g>
      <rect x="1404" y="382" width="331" height="730" fill="#0000ff" fillOpacity="0.3" />
      <path d="M1404.500 382v730M1733.500 382v730" stroke="#0000e8" strokeDasharray="1 1" shapeRendering="crispEdges" />
      <g transform="translate(1270 360) scale(.414542 .333333)" fill="none">
        {curves.map(([c, p]) => (
          <polyline key={c} points={p} stroke={c} strokeWidth="2" vectorEffect="non-scaling-stroke" />
        ))}
        <polyline points="485,2187 688,2187" stroke="#b4004c" strokeWidth="2" vectorEffect="non-scaling-stroke" />
      </g>
      <g stroke="#6e6e6e" shapeRendering="crispEdges">
        <path d="M1325 1112.500h566M1325.500 382v730" />
        {ys.map(([v, y]) => <path key={v} d={`M1319 ${y}h6`} />)}
        {[1, 2, 3, 4, 6, 7, 8, 9, 11, 12, 13, 14].map((i) => (
          <path key={i} d={`M1322 ${383.500 + i * 47.060}h3`} />
        ))}
        {Array.from({ length: 17 }, (_, i) => i - 2).map((i) => (
          <path key={i} d={`M${1408.500 + i * 32.400} 1113v${i % 5 ? 3 : 6}`} />
        ))}
      </g>
      <g {...axisText} fill="#9c9c9c">
        {ys.map(([v, y]) => <text key={v} x="1310" y={y + 4.500}>{v}</text>)}
        <text x="1408.300" y="1133.500" textAnchor="middle">0</text>
        <text x="1570" y="1133.500" textAnchor="middle">200</text>
        <text x="1732" y="1133.500" textAnchor="middle">400</text>
        <text x="1608" y="1152" textAnchor="middle" textLength="76" lengthAdjust="spacingAndGlyphs" fontSize="15.500" fontWeight="bold">Intensity</text>
        <text transform="translate(1306 746) rotate(-90)" textAnchor="middle" textLength="136" lengthAdjust="spacingAndGlyphs" fontSize="15.500" fontWeight="bold">Log(Frequency)</text>
      </g>
    </svg>
  );
}

const Spinner = ({ value, className }) => (
  <div className={`flex h-[27px] items-stretch rounded-[3px] border border-[#f4f4f4] bg-[#2e3437] text-[#a2a2a2] shadow-[inset_0_0_0_1px_#4a5054] ${className}`}>
    <div className="flex-1 self-center pl-1 tracking-[-0.2px]">{value}</div>
    <div className="flex w-[15px] flex-col items-center justify-between border-l border-[#22272a] py-1">
      <svg viewBox="0 0 8 5" className="h-[5px] w-2"><path d="M1 4l3-3 3 3" fill="none" stroke="#a8a8a8" strokeWidth="1.300" /></svg>
      <div className="h-px w-full bg-[#22272a]" />
      <svg viewBox="0 0 8 5" className="h-[5px] w-2"><path d="M1 1l3 3 3-3" fill="none" stroke="#a8a8a8" strokeWidth="1.300" /></svg>
    </div>
  </div>
);

const Section = ({ title, className, children }) => (
  <div className={`mx-[3px] flex justify-between rounded-t-[3px] border border-[#4c5154] bg-[#505557] shadow-[inset_0_0_0_1px_#2b2e30] ${className}`}>
    <div className="mt-0.5 ml-[3px] h-[17px] bg-[#252525] px-px font-bold leading-[17px] text-[#a0c6ce]">{title}</div>
    {children}
  </div>
);

function HistogramPanel() {
  return (
    <div className="flex h-[1069px] w-[639px] flex-col rounded-lg bg-[#252525]">
      <div className="flex h-8 rounded-t-lg bg-gradient-to-b from-[#4b4c4f] to-[#404143]">
        <Tab icon="dataTab" label="Data" text="text-[#c0c0c0]" className="w-[61px] pl-1" />
        <Tab active icon="color" label="Histogram" close bg="from-[#2a2a2a] to-[#252525]" className="w-[116px] pl-1" />
        <Tab icon="header" label="Header Table" text="text-[#d0d0d0]" className="pl-1" />
        <div className="flex-1" />
        <MinMax className="mt-3 mr-[18px]" />
      </div>
      <div className="mt-[3px] ml-[71px] flex h-[30px] gap-[3px]">
        <div className="flex w-[526px] items-center bg-[#505557]">
          <Tools items={histogramTools} />
        </div>
        <div className="flex w-[30px] items-center bg-[#505557]">
          <Tools items={[["tri", "ml-[13px]"]]} />
        </div>
      </div>
      <Section title="Image Settings" className="h-[23px]" />
      <div className="mt-px ml-2 h-[18px] leading-[16px] text-[#8c8c8c]">Colour scheme:</div>
      <div className="mt-[7px] ml-[14px] flex h-[25px] w-[610px] rounded-[3px] border-[3px] border-[#f2f2f2] bg-[#3e4244]">
        <div className="flex-1 pl-0.5 leading-[19px] text-white">Nipy Spectral</div>
        <div className="flex w-[19px] flex-col items-center justify-center gap-[3px] bg-[#f0efee]">
          <svg viewBox="0 0 8 5" className="h-[5px] w-2"><path d="M1 4l3-3 3 3" fill="none" stroke="#222" strokeWidth="1.400" /></svg>
          <svg viewBox="0 0 8 5" className="h-[5px] w-2"><path d="M1 1l3 3 3-3" fill="none" stroke="#222" strokeWidth="1.400" /></svg>
        </div>
      </div>
      <div className="mt-2 flex h-[17px] items-center pl-4 text-[#8c8c8c]">
        <div className="h-[11px] w-[11px] bg-white" />
        <span className="ml-2 w-[73px]">Log Scale</span>
        <div className="h-[11px] w-[11px] bg-white" />
        <span className="ml-[7px]">Inverted</span>
      </div>
      <Section title="Histogram Plot" className="mt-[17px] h-9">
        <div className="mt-2 mr-3 flex gap-3">
          {icons.reset}
          {icons.lock}
        </div>
      </Section>
      <div className="ml-2 flex h-[17px] items-center text-[#8c8c8c]">Histogram information for active plot view</div>
      <div className="mt-2 flex h-[27px] items-center pl-[13px] text-[#8c8c8c]">
        <span className="w-8">Min:</span>
        <Spinner value="-4.7943" className="w-[75px]" />
        <div className="flex-1" />
        <span>Max:</span>
        <Spinner value="404.1481" className="mr-[14px] ml-[5px] w-[86px]" />
      </div>
      <div className="mt-[7px]">
        <HistogramPlot />
      </div>
    </div>
  );
}

export default function App() {
  return (
    <div className='flex h-[1200px] w-[1920px] flex-col overflow-hidden border-b border-[#46628a] bg-[#505557] font-["DejaVu_Sans",sans-serif] text-[13px] leading-4 whitespace-nowrap'>
      <TitleBar />
      <MenuBar />
      <MainToolbar />
      <div className="flex gap-1.5 pl-1">
        <Explorer />
        <div className="flex w-[957px] flex-col">
          <Editor />
          <ToolsPanel />
        </div>
        <HistogramPanel />
      </div>
    </div>
  );
}
